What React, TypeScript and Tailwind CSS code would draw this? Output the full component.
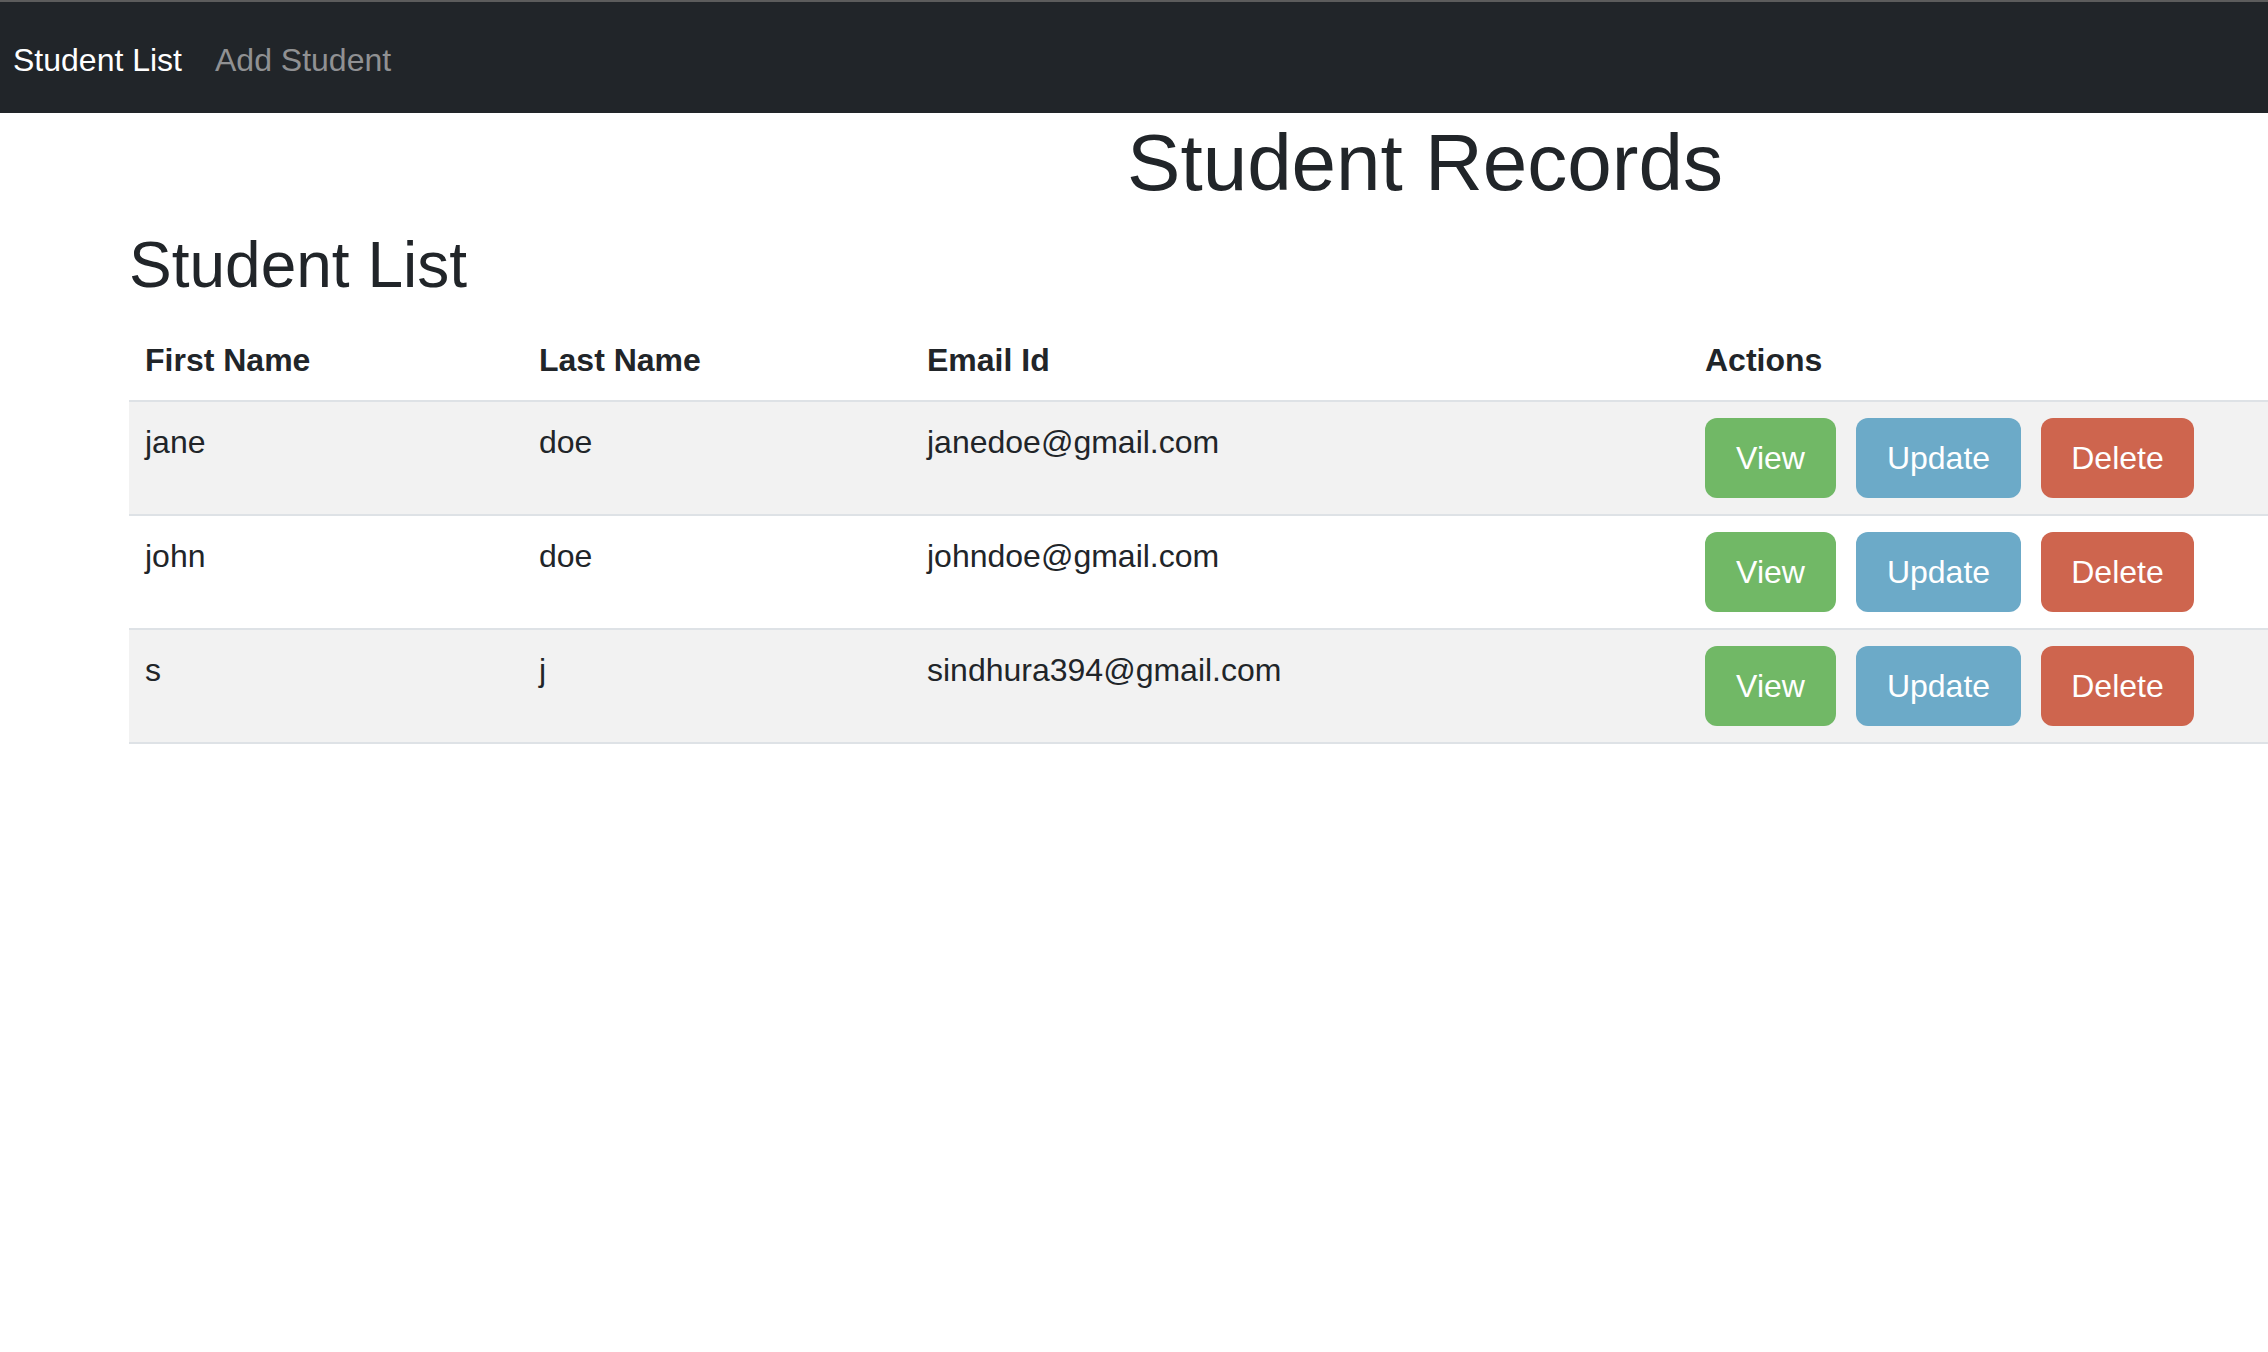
import React from "react";

const students = [
  { first: "jane", last: "doe", email: "janedoe@gmail.com" },
  { first: "john", last: "doe", email: "johndoe@gmail.com" },
  { first: "s", last: "j", email: "sindhura394@gmail.com" },
];

export default function App() {
  return (
    <div
      className="w-full min-h-[1352px] overflow-hidden bg-white text-[#212529]"
      style={{ fontFamily: '"Liberation Sans", Arial, sans-serif' }}
    >
      <div className="h-[2px] bg-[#5c5c5c]" />
      <nav className="h-[111px] bg-[#212529] flex items-start pt-[34px] pl-[13px] gap-[33px] text-[32px] leading-[48px]">
        <span className="text-white">Student List</span>
        <span className="text-[#909193]">Add Student</span>
      </nav>
      <div className="w-[2640px] ml-[105px] px-[24px] pt-[2px]">
        <h1 className="text-center text-[80px] leading-[96px] font-medium mb-[16px]">Student Records</h1>
        <h2 className="text-[64px] leading-[77px] font-medium mb-[16px]">Student List</h2>
        <table className="w-full table-fixed border-collapse text-[32px] leading-[48px]">
          <colgroup>
            <col className="w-[394px]" />
            <col className="w-[388px]" />
            <col className="w-[778px]" />
            <col />
          </colgroup>
          <thead>
            <tr className="border-b-2 border-[#dee2e6]">
              <th className="text-left font-bold p-[16px] align-top">First Name</th>
              <th className="text-left font-bold p-[16px] align-top">Last Name</th>
              <th className="text-left font-bold p-[16px] align-top">Email Id</th>
              <th className="text-left font-bold p-[16px] align-top">Actions</th>
            </tr>
          </thead>
          <tbody>
            {students.map((s, i) => (
              <tr
                key={s.email}
                className={
                  i % 2 === 0
                    ? "border-b-2 border-[#dee2e6] bg-[#f2f2f2]"
                    : "border-b-2 border-[#dee2e6] bg-white"
                }
              >
                <td className="p-[16px] align-top">{s.first}</td>
                <td className="p-[16px] align-top">{s.last}</td>
                <td className="p-[16px] align-top">{s.email}</td>
                <td className="p-[16px] align-top">
                  <div className="flex gap-[20px]">
                    <button className="w-[131px] h-[80px] rounded-[12px] bg-[#71b866] text-white text-[32px] leading-[48px]">
                      View
                    </button>
                    <button className="w-[165px] h-[80px] rounded-[12px] bg-[#6caac8] text-white text-[32px] leading-[48px]">
                      Update
                    </button>
                    <button className="w-[153px] h-[80px] rounded-[12px] bg-[#ce654e] text-white text-[32px] leading-[48px]">
                      Delete
                    </button>
                  </div>
                </td>
              </tr>
            ))}
          </tbody>
        </table>
      </div>
    </div>
  );
}
